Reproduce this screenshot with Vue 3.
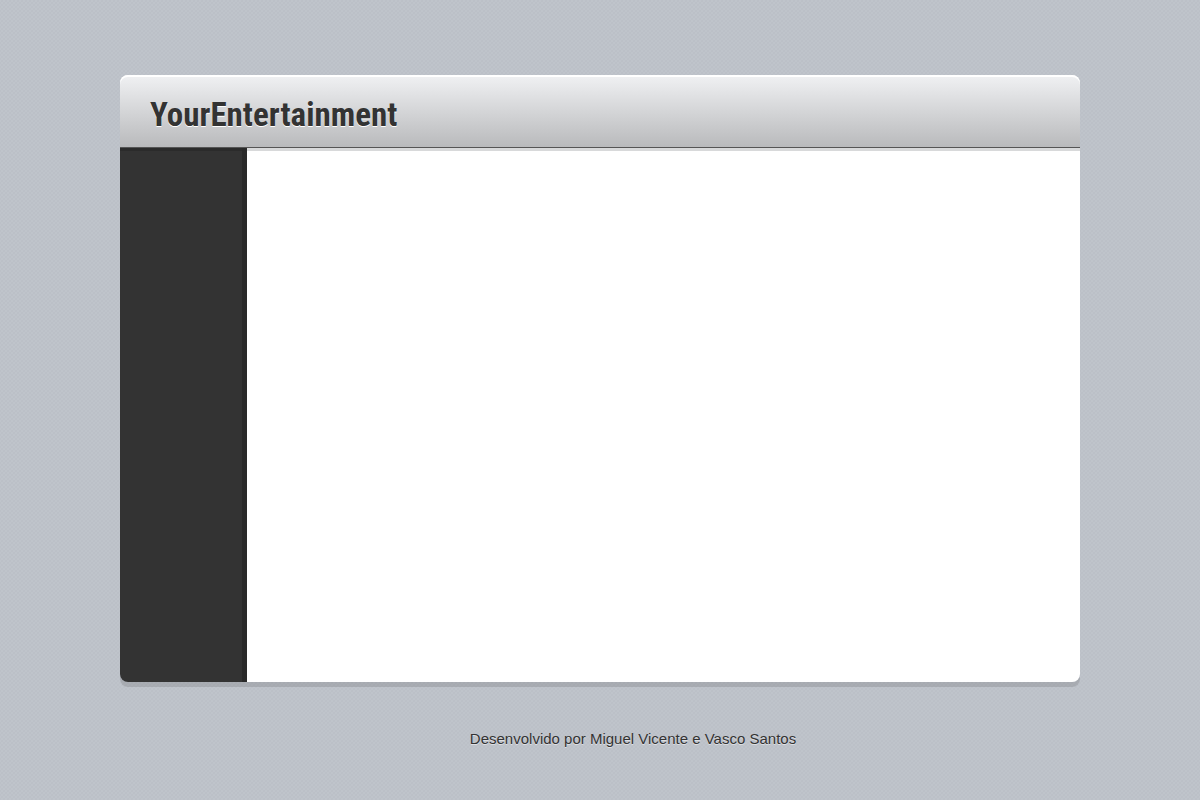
<script setup>
const title = 'YourEntertainment'
const credits = 'Desenvolvido por Miguel Vicente e Vasco Santos'
</script>

<template>
  <div class="page">
    <div class="window">
      <header class="header">
        <h1>{{ title }}</h1>
      </header>
      <div class="body">
        <nav class="sidebar" aria-label="Menu"></nav>
        <main class="content"></main>
      </div>
    </div>
    <footer class="footer">{{ credits }}</footer>
  </div>
</template>

<style>
body {
  margin: 0;
  background-color: #bfc4cb;
  background-image:
    repeating-linear-gradient(45deg, rgba(90, 100, 115, 0.04) 0 1px, transparent 1px 3px),
    repeating-linear-gradient(-45deg, rgba(90, 100, 115, 0.04) 0 1px, transparent 1px 3px);
  background-size: 4px 4px;
}
</style>

<style scoped>
.page {
  box-sizing: border-box;
  min-height: 100vh;
  padding: 75px 10% 0;
  display: flex;
  flex-direction: column;
  font-family: "Liberation Sans", Arial, sans-serif;
  color: #333;
}

.window {
  flex: 1;
  display: flex;
  flex-direction: column;
  border-radius: 8px;
  box-shadow: 0 5px 0 rgba(50, 50, 50, 0.15);
}

.header {
  padding: 20px 30px 12px;
  border-bottom: 1px solid #555;
  border-radius: 8px 8px 0 0;
  background: linear-gradient(#f0f1f3, #b9babc);
  box-shadow: inset 0 2px 0 #fff;
}

h1 {
  margin: 0;
  font: bold 33px/40px "Arial Narrow", "Roboto Condensed", "Liberation Sans", sans-serif;
  text-shadow: 0 1px 0 #fff;
}

.body {
  flex: 1;
  display: flex;
}

.sidebar {
  flex: 0 0 127px;
  border-radius: 0 0 0 8px;
  background: #333;
  box-shadow: inset -5px 0 0 #292929, inset 0 3px 0 #2b2b2b;
}

.content {
  flex: 1;
  border-radius: 0 0 8px 0;
  background: #fff;
  box-shadow: inset 0 3px 0 #d8d9da;
}

.footer {
  padding: 48px 0 52px 66px;
  font-size: 15px;
  line-height: 18px;
  text-align: center;
  text-shadow: 0 1px 0 rgba(255, 255, 255, 0.5);
}
</style>
